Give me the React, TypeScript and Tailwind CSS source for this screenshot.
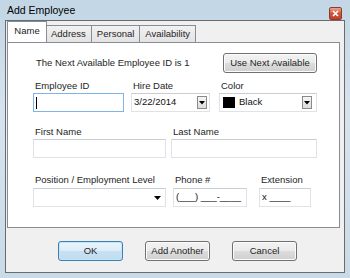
import React from 'react';

const font = "font-['Liberation_Sans',Arial,sans-serif]";

function Label({ children }: { children: React.ReactNode }) {
  return <div className="h-[12px] pl-[2px] text-[9.5px] leading-[12px] text-[#1e1e1e]">{children}</div>;
}

function TextBox({ className = '', focused = false, children }: { className?: string; focused?: boolean; children?: React.ReactNode }) {
  return (
    <div
      className={
        'flex h-[19px] items-center border bg-white px-[2px] text-[9.5px] text-[#111] ' +
        (focused ? 'border-[#7eb4ea] ' : 'border-[#dfe3e8] border-t-[#c9ced6] ') +
        className
      }
    >
      {children}
    </div>
  );
}

function DropBtn() {
  return (
    <div className="flex h-[13px] w-[10px] items-center justify-center border border-[#8a8a8a] bg-[linear-gradient(#f6f6f6,#dcdcdc)]">
      <svg width="6" height="4" viewBox="0 0 6 4">
        <path d="M0 0h6L3 3.5z" fill="#000" />
      </svg>
    </div>
  );
}

function Tab({ label, active = false }: { label: string; active?: boolean }) {
  if (active) {
    return (
      <div className="relative z-10 -mr-[2px] flex h-[21px] w-[40px] items-center justify-center border border-b-0 border-[#898c95] bg-white pb-[1px] text-[9.5px] text-[#1e1e1e]">
        {label}
      </div>
    );
  }
  return (
    <div className="mt-[3px] flex h-[17px] items-center border border-b-0 border-[#898c95] bg-[linear-gradient(#f2f2f2,#e3e3e3)] px-[5px] text-[9.5px] text-[#1e1e1e] [&+&]:border-l-0">
      {label}
    </div>
  );
}

function Button({ children, primary = false, className = '' }: { children: React.ReactNode; primary?: boolean; className?: string }) {
  return (
    <div
      className={
        'flex h-[20px] items-center justify-center rounded-[3px] border text-[9.5px] text-[#1e1e1e] ' +
        (primary
          ? 'border-[#3c7fb1] bg-[linear-gradient(#eaf6fd,#dcecf7_50%,#c8e1f2_51%,#bedcf0)] shadow-[inset_0_0_0_1px_#bfe7f9] '
          : 'border-[#707070] bg-[linear-gradient(#f2f2f2,#ebebeb_50%,#dddddd_51%,#cfcfcf)] shadow-[inset_0_0_0_1px_#fcfcfc] ') +
        className
      }
    >
      {children}
    </div>
  );
}

export default function App() {
  return (
    <div className={`flex h-[278px] w-[350px] flex-col bg-[linear-gradient(#c2d6e5,#d5e3ee_40%,#c9dbe8)] ${font}`}>
      {/* title bar */}
      <div className="flex h-[20px] items-center justify-between pl-[7px] pr-[8px]">
        <span className="mt-[1px] text-[10.5px] text-black">Add Employee</span>
        <div className="mt-[6px] flex h-[13px] w-[13px] items-center justify-center rounded-[2px] border border-[#8d3b2f] bg-[linear-gradient(#e8a593,#d0553d_50%,#c13f26)]">
          <svg width="7" height="7" viewBox="0 0 7 7">
            <path d="M1 1l5 5M6 1L1 6" stroke="#fff" strokeWidth="1.6" />
          </svg>
        </div>
      </div>

      {/* client area */}
      <div className="mx-[5px] mb-[5px] flex flex-1 flex-col border border-[#6b6b6b] bg-[#f0f0f0] pl-[1px] pr-[4px]">
        <div className="flex h-[21px] items-end">
          <Tab label="Name" active />
          <Tab label="Address" />
          <Tab label="Personal" />
          <Tab label="Availability" />
        </div>

        <div className="flex h-[186px] flex-col border border-[#898c95] bg-white pl-[25px] pr-[22px]">
          <div className="mt-[10px] flex items-center justify-between">
            <span className="pl-[3px] text-[9.5px] text-[#1e1e1e]">The Next Available Employee ID is 1</span>
            <Button className="w-[94px]">Use Next Available</Button>
          </div>

          <div className="mt-[7px] flex gap-[7px]">
            <div className="w-[91px]">
              <Label>Employee ID</Label>
              <TextBox focused className="mt-[1px]">
                <span className="h-[12px] w-px bg-black" />
              </TextBox>
            </div>
            <div className="w-[79px]">
              <Label>Hire Date</Label>
              <TextBox className="mt-[1px] justify-between pr-[2px]">
                <span>3/22/2014</span>
                <DropBtn />
              </TextBox>
            </div>
            <div className="ml-[2px] flex-1">
              <Label>Color</Label>
              <TextBox className="mt-[1px] justify-between pl-[3px] pr-[4px]">
                <span className="flex items-center gap-[4px]">
                  <span className="h-[11px] w-[12px] bg-black" />
                  <span>Black</span>
                </span>
                <DropBtn />
              </TextBox>
            </div>
          </div>

          <div className="mt-[14px] flex gap-[5px]">
            <div className="w-[133px]">
              <Label>First Name</Label>
              <TextBox className="mt-[1px]" />
            </div>
            <div className="flex-1">
              <Label>Last Name</Label>
              <TextBox className="mt-[1px]" />
            </div>
          </div>

          <div className="mt-[16px] flex">
            <div className="w-[133px]">
              <Label>Position / Employment Level</Label>
              <TextBox className="mt-[2px] justify-end pr-[4px]">
                <svg width="7" height="4" viewBox="0 0 7 4">
                  <path d="M0 0h7L3.5 4z" fill="#000" />
                </svg>
              </TextBox>
            </div>
            <div className="ml-[7px] w-[74px]">
              <Label>Phone #</Label>
              <TextBox className="mt-[2px] whitespace-pre">(___) ___-____</TextBox>
            </div>
            <div className="ml-[12px] w-[52px]">
              <Label>Extension</Label>
              <TextBox className="mt-[2px] whitespace-pre">x ____</TextBox>
            </div>
          </div>
        </div>

        <div className="mt-[13px] flex pl-[51px]">
          <Button primary className="w-[65px]">OK</Button>
          <Button className="ml-[22px] w-[65px]">Add Another</Button>
          <Button className="ml-[22px] w-[65px]">Cancel</Button>
        </div>
      </div>
    </div>
  );
}
